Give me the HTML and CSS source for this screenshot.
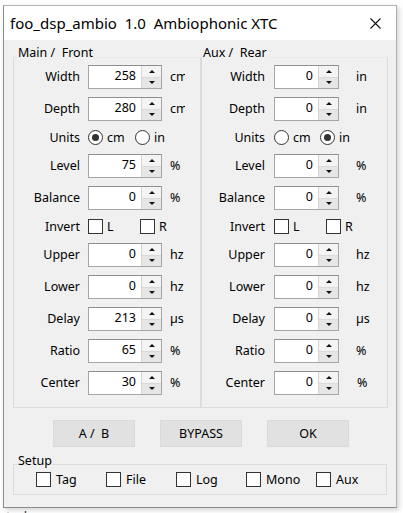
FILE: index.html
```html
<!DOCTYPE html>
<html>
<head>
<meta charset="utf-8">
<link rel="stylesheet" href="styles.css">
</head>
<body>
<div class="window">
  <div class="titlebar">
    <span class="title">foo_dsp_ambio  1.0  Ambiophonic XTC</span>
    <span class="close"><svg width="11" height="11" viewBox="0 0 11 11"><path d="M0.5 0.5 L10.5 10.5 M10.5 0.5 L0.5 10.5" stroke="#111" stroke-width="1.1" fill="none"/></svg></span>
  </div>
  <div class="client">
    <div class="panels">
      <fieldset class="panel left">
        <legend>Main /  Front</legend>
        <div class="grid">
          <span class="lbl">Width</span><div class="spin"><span class="val">258</span><span class="btns"><span class="up"></span><span class="dn"></span></span></div><span class="unit">cm</span>
          <span class="lbl">Depth</span><div class="spin"><span class="val">280</span><span class="btns"><span class="up"></span><span class="dn"></span></span></div><span class="unit">cm</span>
          <span class="lbl">Units</span><div class="choices"><span class="opt radio-opt"><span class="radio on"></span>cm</span><span class="opt"><span class="radio"></span>in</span></div>
          <span class="lbl">Level</span><div class="spin"><span class="val">75</span><span class="btns"><span class="up"></span><span class="dn"></span></span></div><span class="unit">%</span>
          <span class="lbl">Balance</span><div class="spin"><span class="val">0</span><span class="btns"><span class="up"></span><span class="dn"></span></span></div><span class="unit">%</span>
          <span class="lbl">Invert</span><div class="choices"><span class="opt check-opt"><span class="check"></span>L</span><span class="opt"><span class="check"></span>R</span></div>
          <span class="lbl">Upper</span><div class="spin"><span class="val">0</span><span class="btns"><span class="up"></span><span class="dn"></span></span></div><span class="unit">hz</span>
          <span class="lbl">Lower</span><div class="spin"><span class="val">0</span><span class="btns"><span class="up"></span><span class="dn"></span></span></div><span class="unit">hz</span>
          <span class="lbl">Delay</span><div class="spin"><span class="val">213</span><span class="btns"><span class="up"></span><span class="dn"></span></span></div><span class="unit">µs</span>
          <span class="lbl">Ratio</span><div class="spin"><span class="val">65</span><span class="btns"><span class="up"></span><span class="dn"></span></span></div><span class="unit">%</span>
          <span class="lbl">Center</span><div class="spin"><span class="val">30</span><span class="btns"><span class="up"></span><span class="dn"></span></span></div><span class="unit">%</span>
        </div>
      </fieldset>
      <fieldset class="panel right">
        <legend>Aux /  Rear</legend>
        <div class="grid">
          <span class="lbl">Width</span><div class="spin"><span class="val">0</span><span class="btns"><span class="up"></span><span class="dn"></span></span></div><span class="unit">in</span>
          <span class="lbl">Depth</span><div class="spin"><span class="val">0</span><span class="btns"><span class="up"></span><span class="dn"></span></span></div><span class="unit">in</span>
          <span class="lbl">Units</span><div class="choices"><span class="opt radio-opt"><span class="radio"></span>cm</span><span class="opt"><span class="radio on"></span>in</span></div>
          <span class="lbl">Level</span><div class="spin"><span class="val">0</span><span class="btns"><span class="up"></span><span class="dn"></span></span></div><span class="unit">%</span>
          <span class="lbl">Balance</span><div class="spin"><span class="val">0</span><span class="btns"><span class="up"></span><span class="dn"></span></span></div><span class="unit">%</span>
          <span class="lbl">Invert</span><div class="choices"><span class="opt check-opt"><span class="check"></span>L</span><span class="opt"><span class="check"></span>R</span></div>
          <span class="lbl">Upper</span><div class="spin"><span class="val">0</span><span class="btns"><span class="up"></span><span class="dn"></span></span></div><span class="unit">hz</span>
          <span class="lbl">Lower</span><div class="spin"><span class="val">0</span><span class="btns"><span class="up"></span><span class="dn"></span></span></div><span class="unit">hz</span>
          <span class="lbl">Delay</span><div class="spin"><span class="val">0</span><span class="btns"><span class="up"></span><span class="dn"></span></span></div><span class="unit">µs</span>
          <span class="lbl">Ratio</span><div class="spin"><span class="val">0</span><span class="btns"><span class="up"></span><span class="dn"></span></span></div><span class="unit">%</span>
          <span class="lbl">Center</span><div class="spin"><span class="val">0</span><span class="btns"><span class="up"></span><span class="dn"></span></span></div><span class="unit unit-c">%</span>
        </div>
      </fieldset>
    </div>
    <div class="buttons">
      <span class="btn">A /  B</span>
      <span class="btn">BYPASS</span>
      <span class="btn">OK</span>
    </div>
    <fieldset class="setup">
      <legend>Setup</legend>
      <div class="setup-row">
        <span class="sopt"><span class="check"></span>Tag</span>
        <span class="sopt"><span class="check"></span>File</span>
        <span class="sopt"><span class="check"></span>Log</span>
        <span class="sopt"><span class="check"></span>Mono</span>
        <span class="sopt"><span class="check"></span>Aux</span>
      </div>
    </fieldset>
  </div>
</div>
<div class="desk-text">ntrol</div>
</body>
</html>
```

FILE: styles.css
```css
html, body {
  margin: 0;
  padding: 0;
}
body {
  width: 403px;
  height: 513px;
  overflow: hidden;
  background: #ffffff;
  font-family: "Noto Sans", "Segoe UI", sans-serif;
  font-size: 12.5px;
  color: #000;
  position: relative;
}
.window {
  margin: 5px 0 0 3px;
  width: 394px;
  height: 503px;
  box-sizing: border-box;
  border: 1px solid #8c8c8c;
  border-top-color: #b5b5b5;
  border-right-color: #b0b0b0;
  background: #f0f0f0;
  box-shadow: 2px 2px 5px rgba(0,0,0,0.18);
  display: flex;
  flex-direction: column;
}
.titlebar {
  height: 34px;
  background: #ffffff;
  display: flex;
  align-items: center;
  justify-content: space-between;
  padding-left: 6px;
  flex: none;
}
.title {
  font-size: 15px;
  white-space: pre;
  padding-bottom: 1px;
}
.close {
  width: 40px;
  height: 34px;
  display: flex;
  align-items: center;
  justify-content: center;
  margin-right: 1px;
}
.client {
  padding: 5px 0 0 9px;
  flex: 1;
}
.panels {
  display: flex;
}
fieldset {
  margin: 0;
  padding: 0;
  min-width: 0;
  border: 1px solid #dcdcdc;
}
legend {
  white-space: pre;
  line-height: 16px;
  padding: 0 0 8px 0;
}
.panel {
  box-sizing: border-box;
  padding-bottom: 12px;
  border-top-color: #e9e9e9;
}
.panel.left {
  width: 188px;
}
.panel.left legend {
  margin-left: 4px;
}
.panel.right {
  width: 187px;
}
.panel.right legend {
  margin-left: 1px;
}
.grid {
  display: grid;
  row-gap: 8px;
  align-items: center;
  margin-top: -4px;
}
.left .grid {
  grid-template-columns: 66px 74px 15px;
  column-gap: 8px;
}
.right .grid {
  grid-template-columns: 63px 65px 30px;
  column-gap: 9px;
}
.right .grid .unit {
  padding-left: 8px;
}
.right .grid .unit-c {
  padding-left: 9px;
}
.lbl {
  text-align: right;
  white-space: nowrap;
  line-height: 16px;
}
.unit {
  white-space: nowrap;
  overflow: hidden;
  line-height: 16px;
}
.spin {
  height: 24px;
  box-sizing: border-box;
  border: 1px solid #a6a6a6;
  border-top-color: #8f8f8f;
  background: #fff;
  display: flex;
}
.val {
  flex: 1;
  text-align: right;
  padding-right: 5px;
  line-height: 20px;
}
.btns {
  width: 19px;
  border-left: 1px solid #d4d4d4;
  display: flex;
  flex-direction: column;
}
.up, .dn {
  flex: 1;
  display: flex;
  align-items: center;
  justify-content: center;
}
.up {
  background: #f4f4f4;
  border-bottom: 1px solid #dadada;
}
.dn {
  background: #e6e6e6;
}
.up::after {
  content: "";
  border-left: 3px solid transparent;
  border-right: 3px solid transparent;
  border-bottom: 3px solid #111;
}
.dn::after {
  content: "";
  border-left: 3px solid transparent;
  border-right: 3px solid transparent;
  border-top: 3px solid #111;
}
.choices {
  grid-column: 2 / 4;
  display: flex;
  align-items: center;
  height: 17px;
}
.opt {
  display: flex;
  align-items: center;
  white-space: nowrap;
  line-height: 16px;
}
.left .radio-opt { width: 47px; }
.right .radio-opt { width: 46px; }
.check-opt { width: 52px; }
.radio {
  width: 15px;
  height: 15px;
  box-sizing: border-box;
  border: 1px solid #333;
  border-radius: 50%;
  background: #fff;
  margin-right: 4px;
  display: flex;
  align-items: center;
  justify-content: center;
}
.radio.on::after {
  content: "";
  width: 7px;
  height: 7px;
  border-radius: 50%;
  background: #333;
}
.check {
  width: 15px;
  height: 15px;
  box-sizing: border-box;
  border: 1px solid #333;
  background: #fff;
  margin-right: 4px;
  flex: none;
}
.buttons {
  display: flex;
  gap: 25px;
  margin: 12px 0 0 40px;
}
.btn {
  width: 82px;
  height: 27px;
  box-sizing: border-box;
  background: #e1e1e1;
  border: 1px solid #dadada;
  display: flex;
  align-items: center;
  justify-content: center;
  white-space: pre;
}
.setup {
  margin-top: 6px;
  width: 374px;
  box-sizing: border-box;
  padding: 0 0 7px 0;
}
.setup legend {
  margin-left: 4px;
  padding-bottom: 6px;
}
.setup-row {
  display: flex;
  margin: -3px 0 0 22px;
  height: 15px;
  align-items: center;
}
.sopt {
  width: 71px;
  display: flex;
  align-items: center;
  line-height: 16px;
}
.sopt .check {
  margin-right: 5px;
}
.desk-text {
  margin: 0 0 0 -2px;
  font-size: 13px;
  line-height: 16px;
  color: #333;
}
```
